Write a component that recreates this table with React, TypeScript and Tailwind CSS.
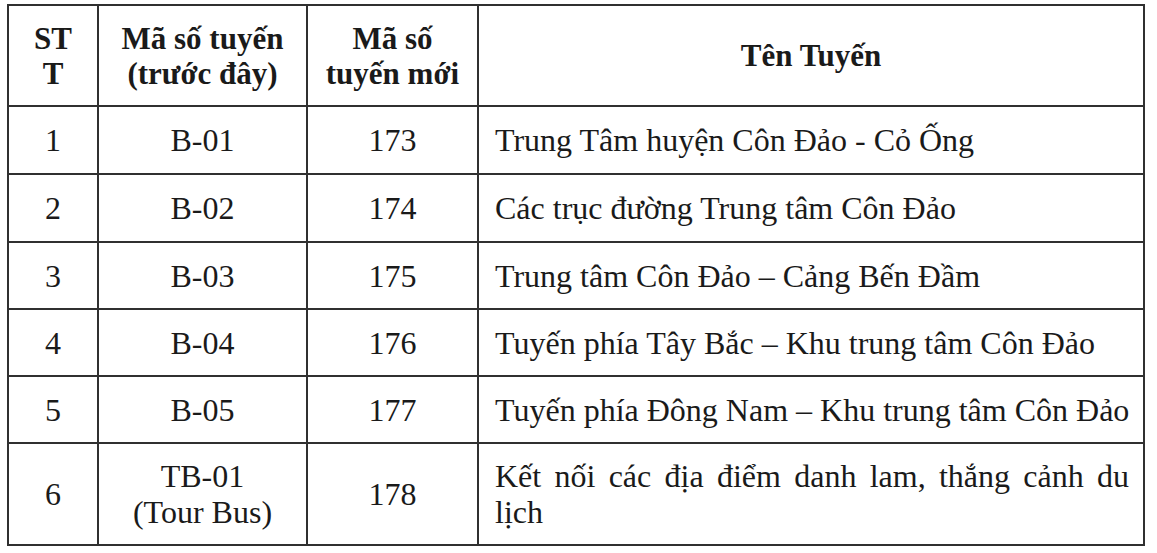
import React from "react";

const rows = [
  ["1", "B-01", "173", "Trung Tâm huyện Côn Đảo - Cỏ Ống"],
  ["2", "B-02", "174", "Các trục đường Trung tâm Côn Đảo"],
  ["3", "B-03", "175", "Trung tâm Côn Đảo – Cảng Bến Đầm"],
  ["4", "B-04", "176", "Tuyến phía Tây Bắc – Khu trung tâm Côn Đảo"],
  ["5", "B-05", "177", "Tuyến phía Đông Nam – Khu trung tâm Côn Đảo"],
];

const center = "bg-white flex flex-col items-center justify-center text-center";
const left = "bg-white flex items-center pl-[16px]";
const head = "bg-white flex flex-col items-center justify-center text-center font-bold text-[31px] leading-[35px]";

export default function App() {
  return (
    <div className="w-[1157px] h-[553px] bg-white pt-[4px] pl-[7px] text-[#1a1a1a] font-['Liberation_Serif',serif] text-[32px] leading-[36px]">
      <div className="grid grid-cols-[88px_207px_169px_664px] grid-rows-[99px_66px_66px_65px_65px_65px_100px] gap-[2px] p-[2px] bg-[#303030] w-fit">
        <div className={head}>
          <span>ST</span>
          <span>T</span>
        </div>
        <div className={head}>
          <span>Mã số tuyến</span>
          <span>(trước đây)</span>
        </div>
        <div className={head}>
          <span>Mã số</span>
          <span>tuyến mới</span>
        </div>
        <div className={head}>
          <span>Tên Tuyến</span>
        </div>

        {rows.map((r) => (
          <React.Fragment key={r[0]}>
            <div className={center}>{r[0]}</div>
            <div className={center}>{r[1]}</div>
            <div className={center}>{r[2]}</div>
            <div className={`${left} whitespace-nowrap pr-[4px]`}>{r[3]}</div>
          </React.Fragment>
        ))}

        <div className={center}>6</div>
        <div className={center}>
          <span>TB-01</span>
          <span>(Tour Bus)</span>
        </div>
        <div className={center}>178</div>
        <div className={`${left} pr-[14px]`}>
          <p className="text-justify">Kết nối các địa điểm danh lam, thắng cảnh du lịch</p>
        </div>
      </div>
    </div>
  );
}
